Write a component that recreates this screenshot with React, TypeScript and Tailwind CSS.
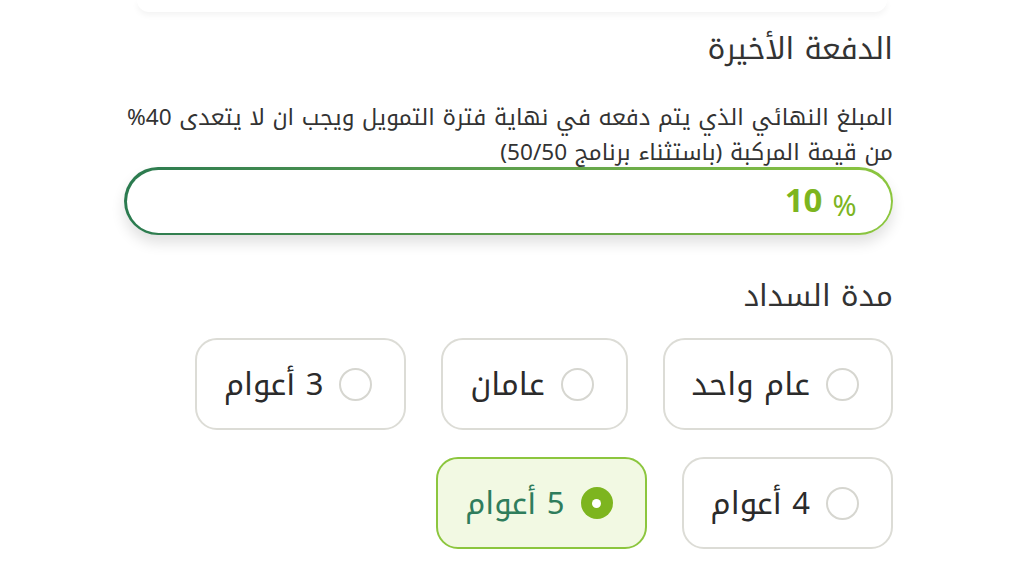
import React from "react";

const options = [
  { label: "عام واحد", selected: false },
  { label: "عامان", selected: false },
  { label: "3 أعوام", selected: false },
  { label: "4 أعوام", selected: false },
  { label: "5 أعوام", selected: true },
];

function Option({ label, selected }: { label: string; selected: boolean }) {
  return (
    <div
      className={
        selected
          ? "flex h-[92px] items-center gap-[16px] rounded-[22px] border-2 border-[#8cc63e] bg-[#f2f9e3] pl-[27px] pr-[32px]"
          : "flex h-[92px] items-center gap-[16px] rounded-[22px] border-2 border-[#dcdcd6] bg-white pl-[27px] pr-[32px]"
      }
    >
      {selected ? (
        <span className="flex h-[32px] w-[32px] items-center justify-center rounded-full bg-[#7db51f]">
          <span className="h-[9px] w-[9px] rounded-full bg-white" />
        </span>
      ) : (
        <span className="h-[33px] w-[33px] rounded-full border-2 border-[#d6d6d0] bg-white" />
      )}
      <span
        className={
          selected
            ? "text-[31px] leading-none text-[#2f7d5c]"
            : "text-[31px] leading-none text-[#2b2b2b]"
        }
      >
        {label}
      </span>
    </div>
  );
}

export default function App() {
  return (
    <div
      dir="rtl"
      className="min-h-[576px] w-[1024px] overflow-hidden bg-white"
      style={{ fontFamily: '"Noto Kufi Arabic", "Noto Sans Arabic", "DejaVu Sans", sans-serif' }}
    >
      <div className="mx-auto h-[12px] w-[750px] rounded-b-2xl bg-white shadow-[0_3px_6px_rgba(0,0,0,0.05)]" />
      <div className="mr-[131px] w-[769px]">
        <h2 className="mt-[17px] text-[30px] leading-[40px] font-normal text-[#333333]">
          الدفعة الأخيرة
        </h2>
        <p className="mt-[31px] text-[22.6px] leading-[35px] text-[#333333]">
          <span className="block whitespace-nowrap">
            المبلغ النهائي الذي يتم دفعه في نهاية فترة التمويل ويجب ان لا يتعدى 40%
          </span>
          <span className="block whitespace-nowrap">من قيمة المركبة (باستثناء برنامج 50/50)</span>
        </p>
        <div className="mt-[-3px] rounded-full bg-gradient-to-l from-[#8cc63e] to-[#2a7a4f] p-[2.5px] shadow-[0_8px_14px_rgba(0,0,0,0.12)]">
          <div className="flex h-[63px] items-center rounded-full bg-white pr-[34px]">
            <span className="text-[33px] font-bold leading-none text-[#7db51f]" dir="ltr">
              10
              <span className="ml-[10px] inline-block translate-y-[4px] text-[29px] font-normal">%</span>
            </span>
          </div>
        </div>
        <h3 className="mt-[41px] text-[30px] leading-[40px] font-normal text-[#333333]">مدة السداد</h3>
        <div className="mt-[22px] flex flex-wrap gap-x-[35px] gap-y-[27px]">
          {options.map((o) => (
            <Option key={o.label} label={o.label} selected={o.selected} />
          ))}
        </div>
      </div>
    </div>
  );
}
